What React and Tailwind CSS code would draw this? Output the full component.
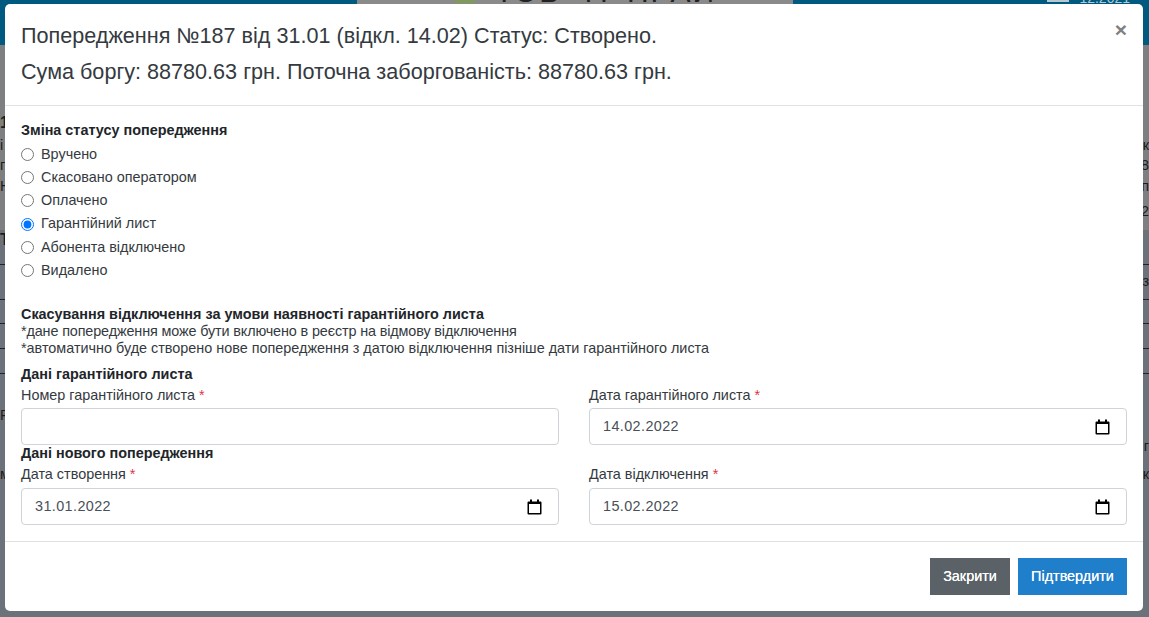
import React, { useState } from "react";

const statuses = [
  "Вручено",
  "Скасовано оператором",
  "Оплачено",
  "Гарантійний лист",
  "Абонента відключено",
  "Видалено",
];

// slivers of the dimmed page that stay visible beside the modal
const pageRows = [
  { h: 65, left: "", right: "" },
  { h: 26, left: "1", right: "", bold: true },
  { h: 20, left: "і", right: "к" },
  { h: 20, left: "г", right: "8" },
  { h: 22, left: "Н", right: "п" },
  { h: 28, left: "", right: "2" },
  { h: 28, left: "Т", right: "", bold: true },
  { h: 11, left: "", right: "", line: true },
  { h: 35, left: "", right: "з", line: true },
  { h: 24, left: "", right: "", line: true },
  { h: 25, left: "", right: "", line: true },
  { h: 25, left: "", right: "", line: true },
  { h: 26, left: "", right: "" },
  { h: 32, left: "Р", right: "" },
  { h: 30, left: "", right: "г" },
  { h: 25, left: "м", right: "к" },
];

const CalendarIcon = () => (
  <svg width="15" height="16" viewBox="0 0 15 16" className="shrink-0">
    <path d="M3 0.5h2v2h5v-2h2v2h1.5a1 1 0 0 1 1 1v11a1 1 0 0 1-1 1h-12a1 1 0 0 1-1-1v-11a1 1 0 0 1 1-1h1.5z" fill="#000" />
    <rect x="2" y="5" width="11" height="9" fill="#fff" />
  </svg>
);

const Label = ({ children }) => (
  <div className="mt-[2px] h-[21px] leading-[21px] text-[#343a40]">
    {children} <span className="text-[#dc3545]">*</span>
  </div>
);

const DateField = ({ label, value, gap = "mt-[2px]" }) => (
  <div>
    <Label>{label}</Label>
    <div className={`${gap} h-[37px] flex items-center justify-between pl-[13px] pr-[16px] border border-[#ced4da] rounded-[4px] text-[#495057]`}>
      <span className="tracking-[0.4px]">{value}</span>
      <CalendarIcon />
    </div>
  </div>
);

export default function App() {
  const [status, setStatus] = useState("Гарантійний лист");

  return (
    <div
      className="relative w-[1149px] h-[617px] overflow-hidden bg-[#6c727a] text-[14.4px] text-[#212529]"
      style={{ fontFamily: '"Liberation Sans", Arial, sans-serif' }}
    >
      {/* dimmed page behind the modal */}
      <div className="flex h-[45px] bg-[#005a7f]">
        <div className="w-[357px]" />
        <div className="w-[436px] h-[4px] bg-[#8a8a8a] overflow-hidden flex items-end">
          <div className="ml-[98px] w-[20px] h-[3px] bg-[#7f9a5a] self-start shrink-0" />
          <span className="relative top-[3px] ml-[20px] text-[30px] leading-none text-[#222] whitespace-nowrap tracking-[2px] shrink-0">
            ТОВ "ІТ-ПРАЙ"
          </span>
        </div>
        <div className="flex-1 flex justify-end items-end gap-[10px] pr-[19px] h-[4px] overflow-hidden">
          <div className="w-[22px] h-[2px] bg-[#b8c8d0] self-start" />
          <span className="relative top-[1px] text-[14px] leading-none text-[#b8c8d0]">12.2021</span>
        </div>
      </div>
      <div className="bg-[#7d7f80] h-[185px] absolute top-[45px] inset-x-0" />
      <div className="absolute top-[45px] inset-x-0 flex flex-col">
        {pageRows.map((row, i) => (
          <div
            key={i}
            style={{ height: row.h }}
            className={`flex justify-between items-center overflow-hidden text-[#1c1c1c] ${row.line ? "border-b border-[#1f2226]" : ""} ${row.bold ? "font-bold text-[16px]" : ""}`}
          >
            <span>{row.left}</span>
            <span>{row.right}</span>
          </div>
        ))}
      </div>

      {/* modal */}
      <div className="absolute left-[5px] top-[4px] w-[1138px] h-[607px] bg-white rounded-[5px] flex flex-col">
        <div className="relative h-[102px] pt-[14px] pl-[16px] border-b border-[#dee2e6] text-[21.6px] leading-[36px] text-[#343a40]">
          <div>Попередження №187 від 31.01 (відкл. 14.02) Статус: Створено.</div>
          <div>Сума боргу: 88780.63 грн. Поточна заборгованість: 88780.63 грн.</div>
          <span className="absolute right-[16px] top-[14px] text-[21px] leading-[24px] font-bold text-[#808080]">×</span>
        </div>

        <div className="flex-1 px-[16px] pt-[14px]">
          <div className="font-bold leading-[21px]">Зміна статусу попередження</div>
          <div className="flex flex-col mt-[2px]">
            {statuses.map((s) => (
              <label key={s} className="h-[23.2px] flex items-center gap-[7px] text-[#343a40]">
                <input
                  type="radio"
                  name="status"
                  className="m-0 w-[13px] h-[13px]"
                  checked={status === s}
                  onChange={() => setStatus(s)}
                />
                {s}
              </label>
            ))}
          </div>

          <div className="mt-[24px] leading-[17px]">
            <div className="font-bold">Скасування відключення за умови наявності гарантійного листа</div>
            <div className="text-[#343a40] tracking-[-0.13px]">*дане попередження може бути включено в реєстр на відмову відключення</div>
            <div className="text-[#343a40]">*автоматично буде створено нове попередження з датою відключення пізніше дати гарантійного листа</div>
          </div>

          <div className="mt-[9px] font-bold leading-[17px]">Дані гарантійного листа</div>
          <div className="grid grid-cols-2 gap-x-[30px]">
            <div>
              <Label>Номер гарантійного листа</Label>
              <input className="block mt-[2px] w-full h-[37px] border border-[#ced4da] rounded-[4px] outline-none" />
            </div>
            <DateField label="Дата гарантійного листа" value="14.02.2022" />
          </div>
          <div className="font-bold leading-[17px]">Дані нового попередження</div>
          <div className="grid grid-cols-2 gap-x-[30px]">
            <DateField label="Дата створення" value="31.01.2022" gap="mt-[3px]" />
            <DateField label="Дата відключення" value="15.02.2022" gap="mt-[3px]" />
          </div>
        </div>

        <div className="h-[70px] border-t border-[#dee2e6] flex justify-end items-start gap-[8px] pt-[16px] pr-[16px]">
          <button className="h-[37px] w-[80px] bg-[#5a6268] text-white text-[14.4px] [text-shadow:0_0_0.5px_#fff]">Закрити</button>
          <button className="h-[37px] w-[109px] bg-[#207fcb] text-white text-[14.4px] [text-shadow:0_0_0.5px_#fff]">Підтвердити</button>
        </div>
      </div>
    </div>
  );
}
